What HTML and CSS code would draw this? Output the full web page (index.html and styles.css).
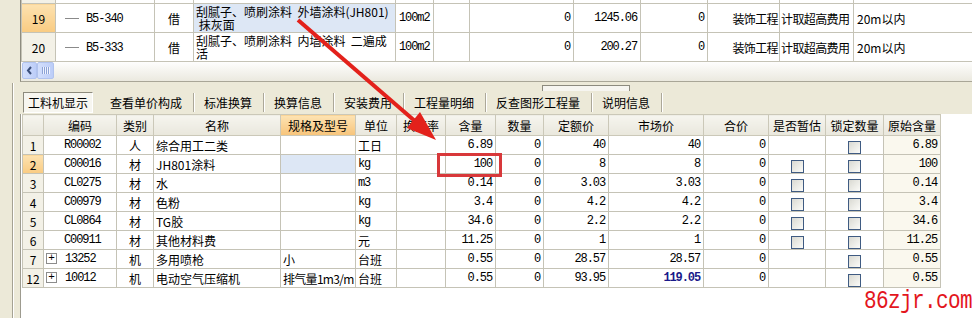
FILE: index.html
```html
<!DOCTYPE html>
<html lang="zh-CN">
<head>
    <meta charset="UTF-8">
    <title>工料机显示</title>
    <link rel="stylesheet" href="styles.css">
</head>
<body>
<div class="screen">

    <!-- franja izquierda -->
    <div class="side"><span class="side-line"></span></div>

    <div class="main">

        <!-- tabla superior (partidas) -->
        <div class="top-pane">
            <table class="grid grid-top">
                <colgroup>
                    <col class="w34"><col class="w99"><col class="w39"><col class="w202"><col class="w38"><col class="w36">
                    <col class="w104"><col class="w67"><col class="w67"><col class="w72"><col class="w74"><col class="w125">
                </colgroup>
                <tr class="sliver">
                    <td class="no"></td><td></td><td></td><td></td><td></td><td></td>
                    <td></td><td></td><td></td><td></td><td></td><td></td>
                </tr>
                <tr>
                    <td class="no hl">19</td>
                    <td class="tree"><i class="branch"></i><span class="n">B5-340</span></td>
                    <td class="c">借</td>
                    <td class="name sel">刮腻子、喷刷涂料&nbsp; 外墙涂料(JH801)<br>&nbsp;抹灰面</td>
                    <td class="n">100m2</td>
                    <td></td>
                    <td class="r n">0</td>
                    <td class="r n">1245.06</td>
                    <td class="r n">0</td>
                    <td class="r fit">装饰工程</td>
                    <td class="fit">计取超高费用</td>
                    <td>20m以内</td>
                </tr>
                <tr>
                    <td class="no">20</td>
                    <td class="tree"><i class="branch"></i><span class="n">B5-333</span></td>
                    <td class="c">借</td>
                    <td class="name">刮腻子、喷刷涂料&nbsp; 内墙涂料&nbsp; 二遍成<br>活</td>
                    <td class="n">100m2</td>
                    <td></td>
                    <td class="r n">0</td>
                    <td class="r n">200.27</td>
                    <td class="r n">0</td>
                    <td class="r fit">装饰工程</td>
                    <td class="fit">计取超高费用</td>
                    <td>20m以内</td>
                </tr>
            </table>
            <div class="hscroll">
                <span class="sb-btn">
                    <svg width="7" height="9" viewBox="0 0 7 9"><polyline points="5,1 2,4.5 5,8" fill="none" stroke="#3b4f7c" stroke-width="2"/></svg>
                </span>
                <span class="sb-btn sb-thumb"><i></i><i></i><i></i><i></i></span>
            </div>
        </div>

        <div class="splitter"><span class="grip"></span></div>

        <!-- pestañas -->
        <div class="tabs">
            <span class="tab on">工料机显示</span>
            <span class="tab">查看单价构成</span>
            <span class="tab">标准换算</span>
            <span class="tab">换算信息</span>
            <span class="tab">安装费用</span>
            <span class="tab">工程量明细</span>
            <span class="tab">反查图形工程量</span>
            <span class="tab">说明信息</span>
        </div>

        <!-- tabla de recursos -->
        <div class="bottom-pane">
            <table class="grid grid-bottom">
                <colgroup>
                    <col class="w21"><col class="w73"><col class="w37"><col class="w127"><col class="w75">
                    <col class="w41"><col class="w49"><col class="w50"><col class="w48"><col class="w65">
                    <col class="w95"><col class="w65"><col class="w57"><col class="w58"><col class="w57">
                </colgroup>
                <tr>
                    <th></th><th>编码</th><th>类别</th><th>名称</th><th class="spec">规格及型号</th>
                    <th>单位</th><th>换算率</th><th>含量</th><th>数量</th><th>定额价</th>
                    <th>市场价</th><th>合价</th><th>是否暂估</th><th>锁定数量</th><th>原始含量</th>
                </tr>
                <tr>
                    <td class="no">1</td><td class="code n">R00002</td><td class="c">人</td><td>综合用工二类</td><td></td>
                    <td>工日</td><td></td><td class="r n">6.89</td><td class="r n">0</td><td class="r n">40</td>
                    <td class="r n">40</td><td class="r n">0</td><td></td><td class="c"><span class="cb"></span></td><td class="r n orig">6.89</td>
                </tr>
                <tr>
                    <td class="no hl">2</td><td class="code n">C00016</td><td class="c">材</td><td>JH801涂料</td><td class="sel"></td>
                    <td class="n">kg</td><td></td><td class="r n">100</td><td class="r n">0</td><td class="r n">8</td>
                    <td class="r n">8</td><td class="r n">0</td><td class="c"><span class="cb"></span></td><td class="c"><span class="cb"></span></td><td class="r n orig">100</td>
                </tr>
                <tr>
                    <td class="no">3</td><td class="code n">CL0275</td><td class="c">材</td><td>水</td><td></td>
                    <td class="n">m3</td><td></td><td class="r n">0.14</td><td class="r n">0</td><td class="r n">3.03</td>
                    <td class="r n">3.03</td><td class="r n">0</td><td class="c"><span class="cb"></span></td><td class="c"><span class="cb"></span></td><td class="r n orig">0.14</td>
                </tr>
                <tr>
                    <td class="no">4</td><td class="code n">C00979</td><td class="c">材</td><td>色粉</td><td></td>
                    <td class="n">kg</td><td></td><td class="r n">3.4</td><td class="r n">0</td><td class="r n">4.2</td>
                    <td class="r n">4.2</td><td class="r n">0</td><td class="c"><span class="cb"></span></td><td class="c"><span class="cb"></span></td><td class="r n orig">3.4</td>
                </tr>
                <tr>
                    <td class="no">5</td><td class="code n">CL0864</td><td class="c">材</td><td>TG胶</td><td></td>
                    <td class="n">kg</td><td></td><td class="r n">34.6</td><td class="r n">0</td><td class="r n">2.2</td>
                    <td class="r n">2.2</td><td class="r n">0</td><td class="c"><span class="cb"></span></td><td class="c"><span class="cb"></span></td><td class="r n orig">34.6</td>
                </tr>
                <tr>
                    <td class="no">6</td><td class="code n">C00911</td><td class="c">材</td><td>其他材料费</td><td></td>
                    <td>元</td><td></td><td class="r n">11.25</td><td class="r n">0</td><td class="r n">1</td>
                    <td class="r n">1</td><td class="r n">0</td><td class="c"><span class="cb"></span></td><td class="c"><span class="cb"></span></td><td class="r n orig">11.25</td>
                </tr>
                <tr>
                    <td class="no">7</td><td class="code n"><span class="plus">+</span>13252</td><td class="c">机</td><td>多用喷枪</td><td>小</td>
                    <td>台班</td><td></td><td class="r n">0.55</td><td class="r n">0</td><td class="r n">28.57</td>
                    <td class="r n">28.57</td><td class="r n">0</td><td></td><td class="c"><span class="cb"></span></td><td class="r n orig">0.55</td>
                </tr>
                <tr>
                    <td class="no">12</td><td class="code n"><span class="plus">+</span>10012</td><td class="c">机</td><td>电动空气压缩机</td><td class="tight">排气量1m3/m</td>
                    <td>台班</td><td></td><td class="r n">0.55</td><td class="r n">0</td><td class="r n">93.95</td>
                    <td class="r n hi">119.05</td><td class="r n">0</td><td></td><td class="c"><span class="cb"></span></td><td class="r n orig">0.55</td>
                </tr>
            </table>
        </div>
    </div>

    <!-- anotaciones -->
    <svg class="arrow" width="972" height="318" viewBox="0 0 972 318">
        <line x1="298" y1="20" x2="416" y2="122" stroke="#e3211b" stroke-width="4"/>
        <polygon points="436,140 407,128 420,112" fill="#e3211b"/>
    </svg>
    <div class="mark-box"></div>
    <div class="watermark">86zjr.com</div>

</div>
</body>
</html>
```

FILE: styles.css
```css
/* Estilos generales */
body {
    margin: 0;
    font-family: "Noto Sans CJK SC", sans-serif;
    font-size: 12px;
    color: #000;
    background-color: #ece9d8;
}
.screen {
    position: relative;
    width: 972px;
    height: 318px;
    overflow: hidden;
    display: flex;
}
.side {
    width: 20px;
    flex: none;
    background-color: #ece9d8;
}
.side-line {
    display: block;
    margin: 83px 0 0 12px;
    width: 1px;
    height: 235px;
    background-color: #a5a293;
    box-shadow: 1px 0 0 #fff;
}
.main {
    flex: 1;
    min-width: 0;
    display: flex;
    flex-direction: column;
}

/* tablas */
.grid {
    border-collapse: collapse;
    table-layout: fixed;
}
.grid td, .grid th {
    border: 1px solid #c5c3b6;
    padding: 0 3px;
    white-space: nowrap;
    overflow: hidden;
    line-height: 17px;
}
.grid .r { text-align: right; }
.grid .c { text-align: center; }
.grid .n {
    font-family: "Liberation Mono", monospace;
    font-size: 12px;
    letter-spacing: -1.1px;
}
.grid .fit {
    padding: 0 1px;
    letter-spacing: -0.6px;
}
.grid .tight {
    padding: 0 0 0 2px;
    letter-spacing: -0.7px;
}
.grid .no {
    background-color: #f3f1e7;
    text-align: center;
    padding: 0;
}
.grid .hl {
    background: linear-gradient(#fde2b0, #f9cb82);
}
.grid .sel {
    background-color: #dde7f5;
}

.w21 { width: 21px; } .w34 { width: 34px; } .w36 { width: 36px; } .w37 { width: 37px; }
.w38 { width: 38px; } .w39 { width: 39px; } .w41 { width: 41px; } .w48 { width: 48px; }
.w49 { width: 49px; } .w50 { width: 50px; } .w57 { width: 57px; } .w58 { width: 58px; }
.w65 { width: 65px; } .w67 { width: 67px; } .w72 { width: 72px; } .w73 { width: 73px; }
.w74 { width: 74px; } .w75 { width: 75px; } .w95 { width: 95px; } .w99 { width: 99px; }
.w104 { width: 104px; } .w125 { width: 125px; } .w127 { width: 127px; } .w202 { width: 202px; }

/* panel superior */
.top-pane {
    height: 82px;
    flex: none;
    overflow: hidden;
    box-sizing: border-box;
    border-left: 1px solid #8e8c80;
    border-bottom: 1px solid #a9a697;
    background: linear-gradient(#fff 75%, #ebe9df);
}
.grid-top {
    width: 957px;
    margin-top: -1px;
    background-color: #fff;
}
.grid-top tr td {
    height: 28px;
}
.grid-top .sliver td {
    height: 3px;
    line-height: 3px;
}
.grid-top .name {
    line-height: 13px;
    padding-left: 2px;
}
.grid-top .tree {
    padding: 0;
}
.branch {
    display: inline-block;
    vertical-align: middle;
    width: 14px;
    height: 1px;
    margin: 0 7px 0 9px;
    background-color: #8a8a8a;
}
.hscroll {
    display: flex;
    height: 17px;
    padding-left: 1px;
}
.sb-btn {
    width: 13px;
    height: 15px;
    border: 1px solid #b1c3ee;
    border-radius: 2px;
    background: linear-gradient(90deg, #d3dffc, #bccdf8);
    display: flex;
    align-items: center;
    justify-content: center;
}
.sb-thumb {
    width: 15px;
    gap: 1px;
}
.sb-thumb i {
    width: 1px;
    height: 7px;
    background-color: #8da3d6;
    box-shadow: 1px 0 0 #eef3ff;
}

/* divisor */
.splitter {
    height: 8px;
    flex: none;
}
.grip {
    display: block;
    width: 86px;
    height: 5px;
    margin: 3px 0 0 522px;
    border: 1px solid #8c8a7e;
    border-bottom: none;
    background-color: #f6f5f0;
}

/* pestañas */
.tabs {
    height: 24px;
    flex: none;
    display: flex;
    align-items: center;
}
.tab {
    height: 19px;
    line-height: 19px;
    padding: 0 11px 0 10px;
    border-right: 1px solid #aca899;
    box-shadow: 1px 0 0 #fff;
}
.tab.on {
    margin: 0 7px 0 3px;
    padding: 0 4px;
    border: 1px solid;
    border-color: #8d8b7d #fff #fff #8d8b7d;
    background-color: #f7f6f0;
    box-shadow: none;
}

/* panel inferior */
.bottom-pane {
    flex: 1;
    background-color: #fff;
    border-left: 1px solid #9d9b8f;
    padding-left: 1px;
}
.grid-bottom {
    width: 918px;
}
.grid-bottom th {
    height: 20px;
    font-weight: normal;
    background: linear-gradient(#f6f5ef, #e9e7dc);
    border-color: #cbc8b8;
}
.grid-bottom th.spec {
    background: linear-gradient(#fde3b3, #f7c47a);
}
.grid-bottom td {
    height: 18px;
}
.grid-bottom .code {
    padding-left: 20px;
}
.grid-bottom td:nth-child(4),
.grid-bottom td:nth-child(5),
.grid-bottom td:nth-child(6) {
    padding-left: 2px;
}
.grid-bottom .orig {
    background-color: #faf8ee;
}
.grid-bottom .hi {
    color: #1a1a8a;
    font-weight: bold;
}
.plus {
    display: inline-block;
    width: 9px;
    height: 9px;
    line-height: 9px;
    margin: 0 8px 0 -18px;
    border: 1px solid #8c8c8c;
    text-align: center;
    letter-spacing: 0;
    font-size: 11px;
    vertical-align: middle;
    background-color: #fff;
}
.cb {
    display: inline-block;
    width: 11px;
    height: 11px;
    vertical-align: middle;
    border: 1px solid #3f5b82;
    background: linear-gradient(135deg, #d9d9d2, #fbfbf8);
}

/* anotaciones */
.arrow {
    position: absolute;
    top: 0;
    left: 0;
    pointer-events: none;
}
.mark-box {
    position: absolute;
    left: 437px;
    top: 153px;
    width: 65px;
    height: 24px;
    box-sizing: border-box;
    border: 3px solid #d8383a;
}
.watermark {
    position: absolute;
    right: 0;
    bottom: 3px;
    font-family: "Liberation Mono", monospace;
    font-size: 21px;
    letter-spacing: -0.6px;
    line-height: 22px;
    color: #e3161d;
    transform: scaleY(1.2);
    transform-origin: bottom;
}
```
